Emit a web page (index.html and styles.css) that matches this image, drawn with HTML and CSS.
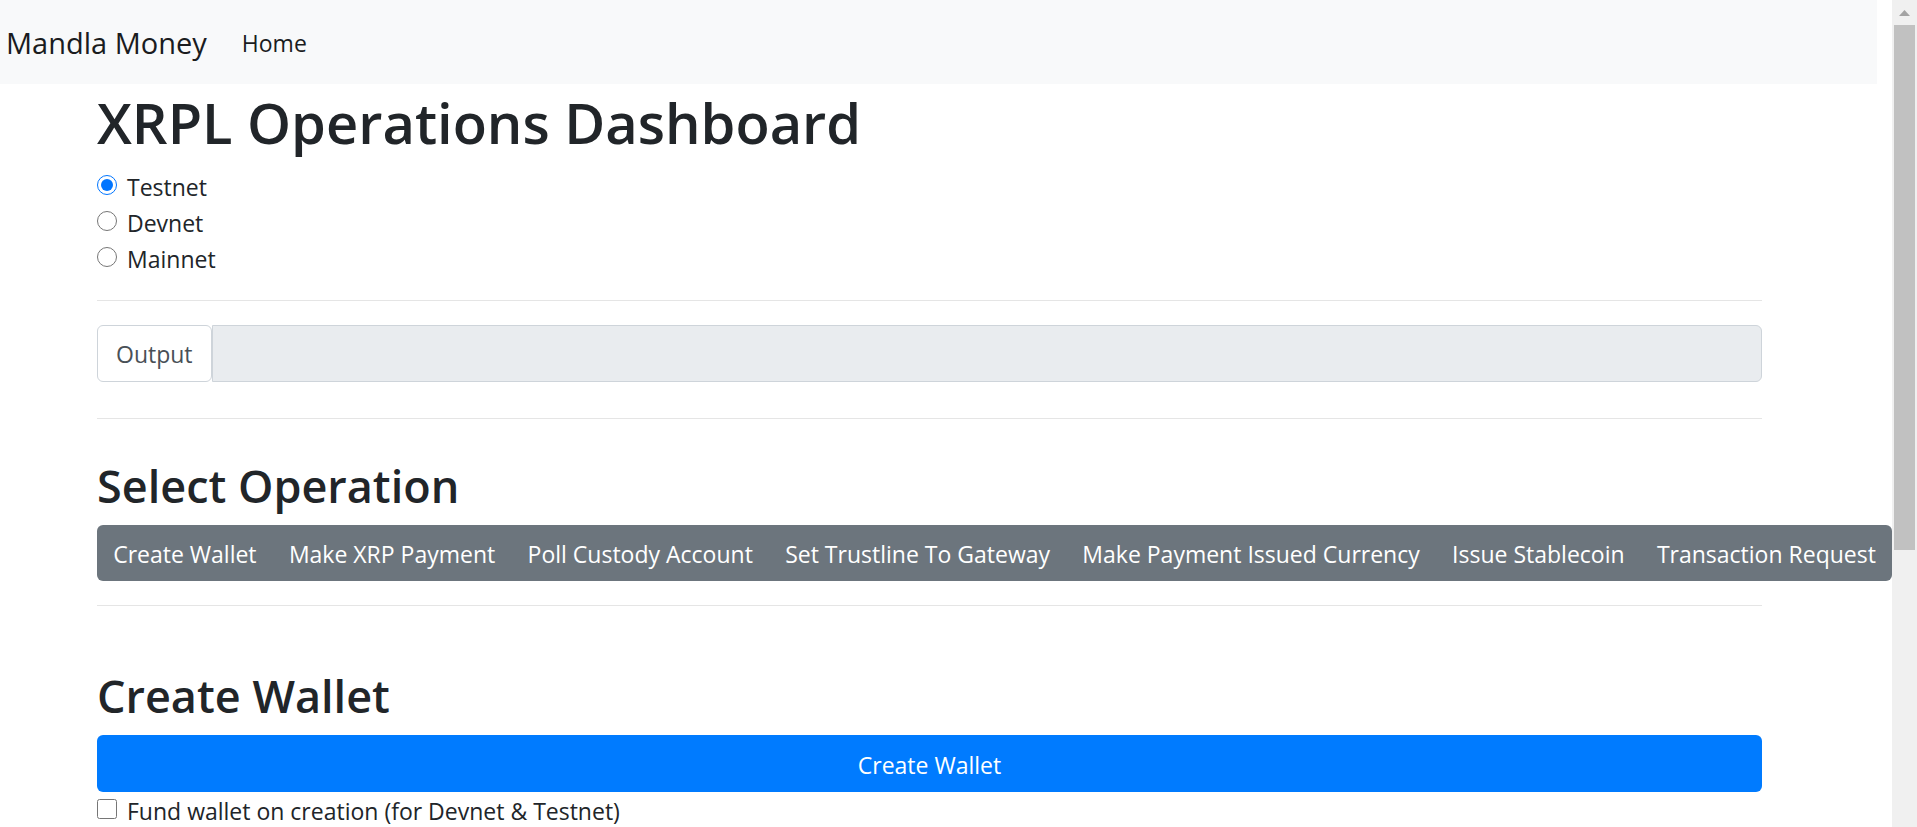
FILE: index.html
```html
<!DOCTYPE html>
<html lang="en">
<head>
<meta charset="utf-8">
<title>Mandla Money</title>
<link rel="stylesheet" href="styles.css">
</head>
<body>
<div class="viewport">
  <div class="page">
    <nav class="navbar">
      <a class="brand" href="#">Mandla Money</a>
      <a class="nav-link" href="#">Home</a>
    </nav>
    <main class="container">
      <h1 class="title">XRPL Operations Dashboard</h1>
      <form class="networks">
        <div class="check"><input class="check-input" type="radio" name="network" id="testnet" checked><label for="testnet">Testnet</label></div>
        <div class="check"><input class="check-input" type="radio" name="network" id="devnet"><label for="devnet">Devnet</label></div>
        <div class="check"><input class="check-input" type="radio" name="network" id="mainnet"><label for="mainnet">Mainnet</label></div>
      </form>
      <hr class="rule">
      <div class="output-group">
        <label class="output-label" for="output">Output</label>
        <input class="output-field" type="text" id="output" readonly>
      </div>
      <hr class="rule">
      <section class="operations">
        <h2 class="heading">Select Operation</h2>
        <div class="toolbar">
          <button class="tool" type="button">Create Wallet</button>
          <button class="tool" type="button">Make XRP Payment</button>
          <button class="tool" type="button">Poll Custody Account</button>
          <button class="tool" type="button">Set Trustline To Gateway</button>
          <button class="tool" type="button">Make Payment Issued Currency</button>
          <button class="tool" type="button">Issue Stablecoin</button>
          <button class="tool" type="button">Transaction Request</button>
        </div>
      </section>
      <hr class="rule">
      <section class="wallet">
        <h2 class="heading">Create Wallet</h2>
        <button class="primary" type="button">Create Wallet</button>
        <div class="check"><input class="check-input" type="checkbox" id="fund"><label for="fund">Fund wallet on creation (for Devnet &amp; Testnet)</label></div>
      </section>
    </main>
  </div>
  <div class="scrollbar" aria-hidden="true">
    <svg class="scroll-arrow" width="25" height="25" viewBox="0 0 25 25"><path d="M7 16L12.5 10L18 16Z" fill="#a3a3a3"/></svg>
    <div class="scroll-thumb"></div>
  </div>
</div>
</body>
</html>
```
FILE: styles.css
```css
* {
  box-sizing: border-box;
}

body {
  margin: 0;
  background: #fff;
  color: #212529;
  font-family: "Open Sans", "Noto Sans", sans-serif;
  font-size: 23px;
  line-height: 36px;
}

button,
input {
  font: inherit;
}

.viewport {
  display: grid;
  grid-template-columns: minmax(0, 1fr) 25px;
  height: 100vh;
  overflow: hidden;
}

.navbar {
  display: flex;
  align-items: center;
  gap: 35px;
  height: 84px;
  margin-right: 15px;
  padding: 2px 6px 0;
  background: #f8f9fa;
}

.navbar a {
  color: #1a1c1e;
  text-decoration: none;
}

.brand {
  font-size: 29px;
}

.container {
  padding: 0 130px 0 97px;
}

.title,
.heading {
  font-weight: 600;
}

.title {
  margin: 0 0 10px;
  padding-top: 2px;
  font-size: 56px;
  line-height: 72px;
}

.heading {
  margin: 0 0 10px;
  padding-top: 2px;
  font-size: 45px;
  line-height: 58px;
}

.check {
  display: flex;
  align-items: flex-start;
  gap: 10px;
}

.check label {
  padding-top: 2px;
  line-height: 34px;
}

.check-input {
  flex: none;
  width: 20px;
  height: 20px;
  margin: 7px 0 0;
  accent-color: #0075ff;
}

.rule {
  height: 1px;
  margin: 24px 0;
  border: 0;
  background: #e5e5e5;
}

.output-group {
  display: flex;
  margin-bottom: 36px;
}

.output-label,
.output-field {
  height: 57px;
  border: 1px solid #ced4da;
}

.output-label {
  padding: 10px 18px;
  border-radius: 6px;
  color: #495057;
}

.output-field {
  flex: 1;
  min-width: 0;
  padding: 10px 18px;
  border-radius: 0 6px 6px 0;
  background: #e9ecef;
  outline: 0;
}

.operations {
  padding-top: 12px;
}

.toolbar {
  display: flex;
  margin-right: -130px;
  overflow: hidden;
  border-radius: 6px;
  background: #6c757d;
}

.tool {
  flex: 1 1 auto;
  padding: 11px 0 9px;
  border: 0;
  background: transparent;
  color: #fff;
  white-space: nowrap;
}

.wallet {
  padding-top: 35px;
}

.primary {
  display: block;
  width: 100%;
  padding: 12px 18px 9px;
  border: 0;
  border-radius: 6px;
  background: #007bff;
  color: #fff;
}

.scrollbar {
  background: #f0f0f0;
}

.scroll-arrow {
  display: block;
}

.scroll-thumb {
  height: 525px;
  margin: 0 2px;
  background: #c1c1c1;
}
```
